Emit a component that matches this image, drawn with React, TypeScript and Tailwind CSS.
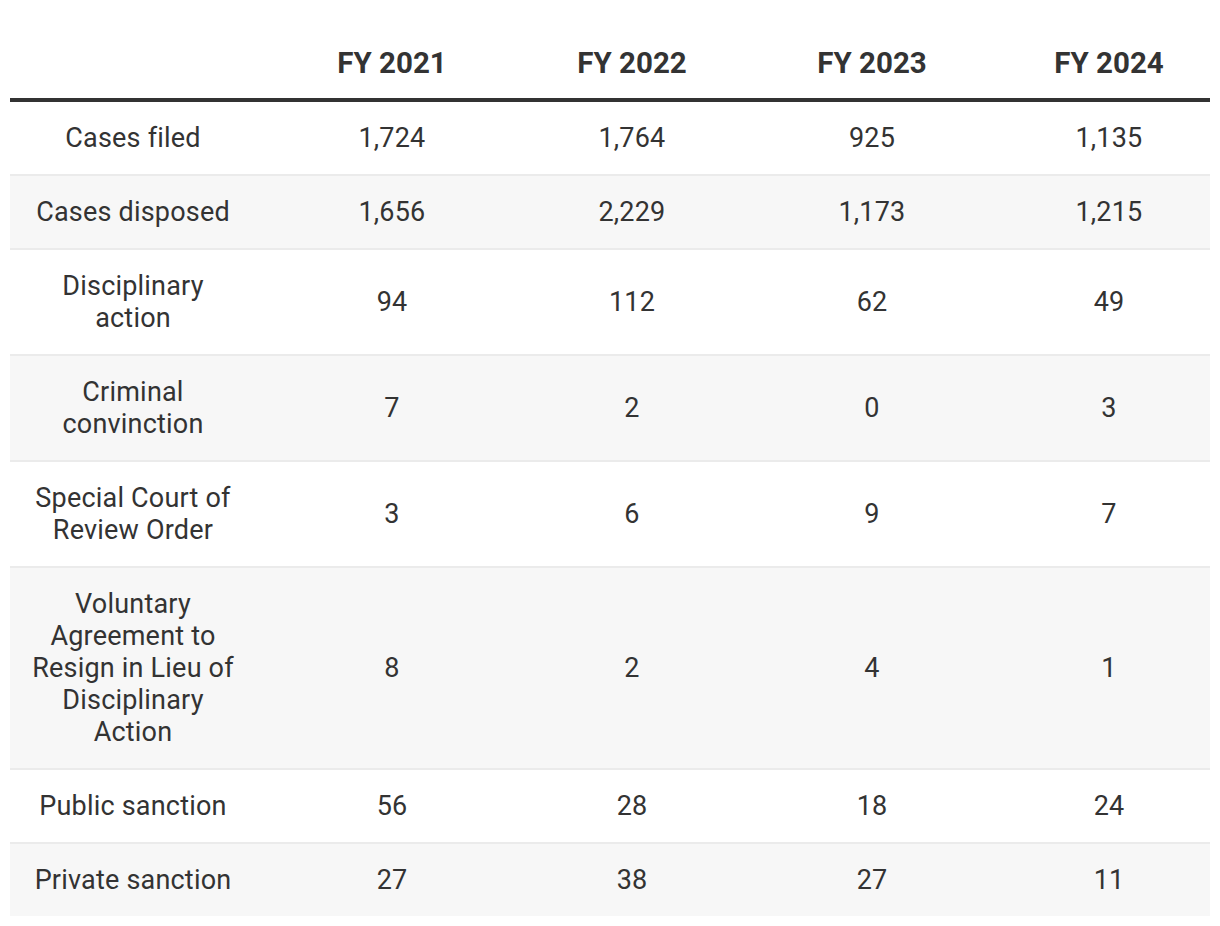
const years = ['FY 2021', 'FY 2022', 'FY 2023', 'FY 2024'];

const rows: { label: string; values: string[] }[] = [
  { label: 'Cases filed', values: ['1,724', '1,764', '925', '1,135'] },
  { label: 'Cases disposed', values: ['1,656', '2,229', '1,173', '1,215'] },
  { label: 'Disciplinary action', values: ['94', '112', '62', '49'] },
  { label: 'Criminal convinction', values: ['7', '2', '0', '3'] },
  { label: 'Special Court of Review Order', values: ['3', '6', '9', '7'] },
  {
    label: 'Voluntary Agreement to Resign in Lieu of Disciplinary Action',
    values: ['8', '2', '4', '1'],
  },
  { label: 'Public sanction', values: ['56', '28', '18', '24'] },
  { label: 'Private sanction', values: ['27', '38', '27', '11'] },
];

const App = () => {
  return (
    <div className="min-h-screen bg-white px-[10px] font-['Roboto',sans-serif] text-[#333]">
      <table className="w-[1200px] table-fixed border-collapse">
        <colgroup>
          <col className="w-[246px]" />
          <col className="w-[272px]" />
          <col className="w-[208px]" />
          <col className="w-[272px]" />
          <col className="w-[202px]" />
        </colgroup>
        <thead>
          <tr className="border-b-4 border-[#333]">
            <th className="h-[100px]" />
            {years.map((y) => (
              <th
                key={y}
                className="h-[100px] pt-[28px] text-center align-middle text-[29.5px] font-bold leading-[36px]"
              >
                {y}
              </th>
            ))}
          </tr>
        </thead>
        <tbody>
          {rows.map((row, i) => (
            <tr
              key={row.label}
              className={`${i % 2 === 1 ? 'bg-[#f7f7f7]' : 'bg-white'} ${
                i < rows.length - 1 ? 'border-b-2 border-[#ebebeb]' : ''
              }`}
            >
              <td className="px-4 py-5 text-center align-middle text-[27px] leading-8 tracking-[0.2px]">
                {row.label}
              </td>
              {row.values.map((v, j) => (
                <td
                  key={j}
                  className="py-5 text-center align-middle text-[27px] leading-8 tracking-[0.2px]"
                >
                  {v}
                </td>
              ))}
            </tr>
          ))}
        </tbody>
      </table>
    </div>
  );
};

export default App;
